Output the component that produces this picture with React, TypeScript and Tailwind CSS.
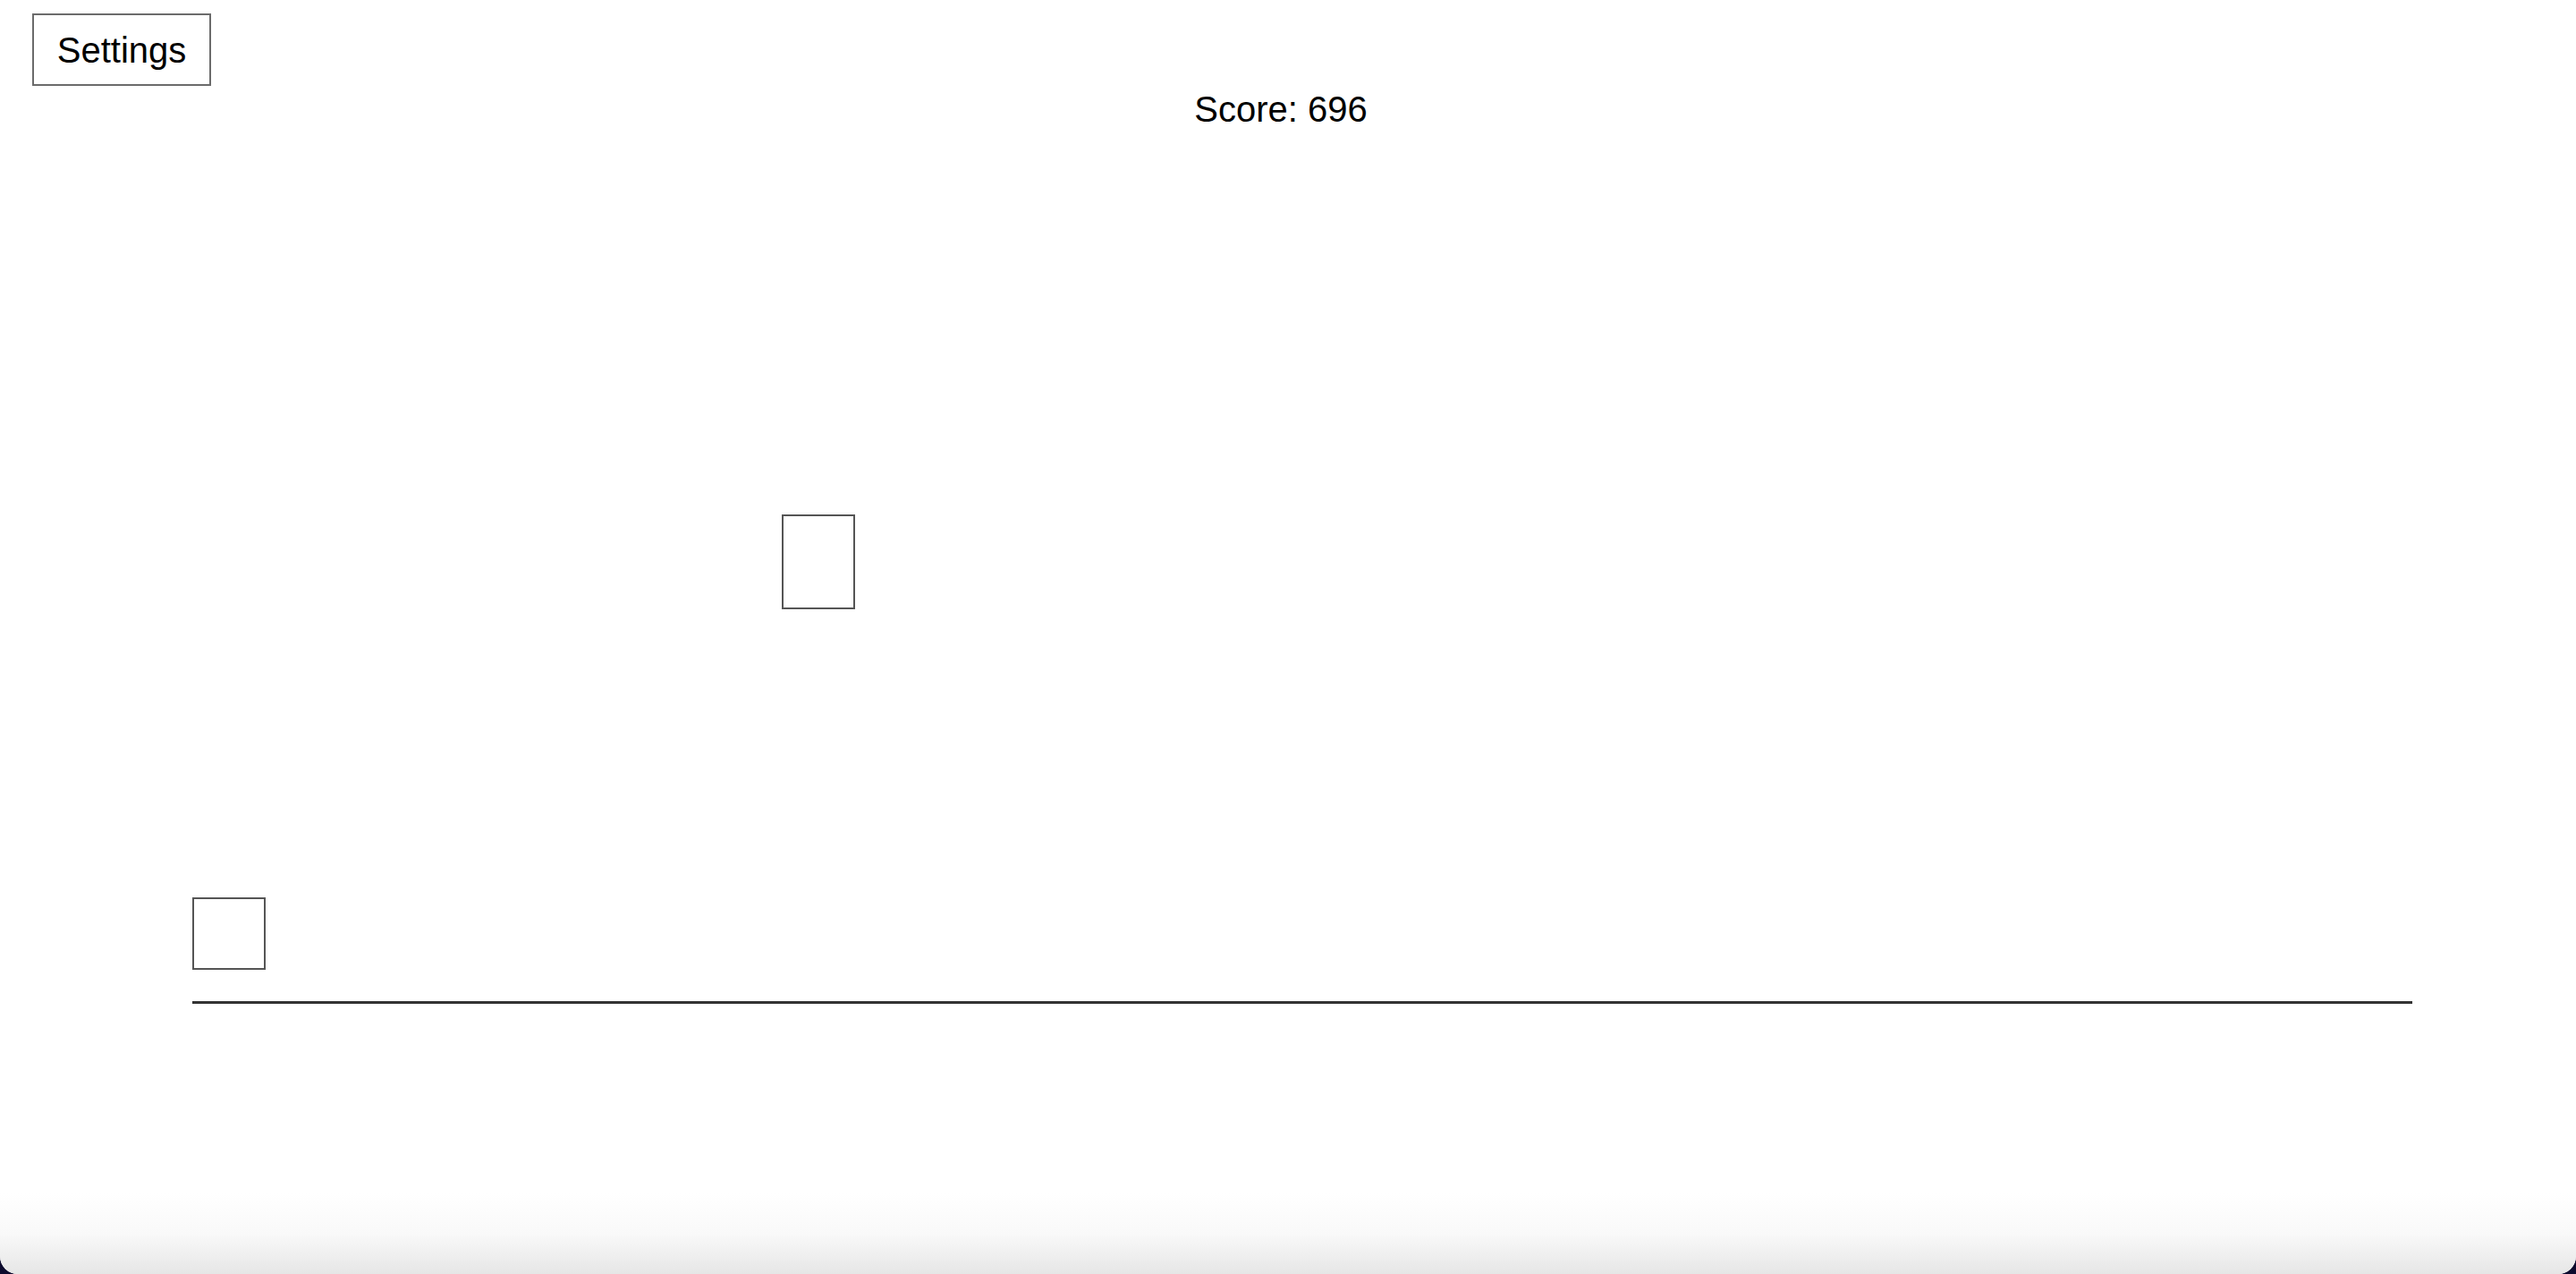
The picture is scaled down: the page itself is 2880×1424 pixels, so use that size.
import React from "react";

const obstacles = [
  { left: 874, top: 575, width: 82, height: 106 },
];

export default function App() {
  return (
    <div className="h-[1424px] w-[2880px] bg-[#0d0b2e] font-['Liberation_Sans',Arial,sans-serif] text-black">
      <div className="flex h-full flex-col overflow-hidden rounded-b-[20px] bg-white">
        <div className="relative flex-1">
          <button className="absolute left-[36px] top-[15px] h-[81px] w-[200px] border-2 border-[#6b6b6b] bg-white text-[40px] leading-none">
            Settings
          </button>
          <div className="pt-[99px] text-center text-[40px] leading-[46px] pr-[16px]">
            Score: 696
          </div>
          {/* game canvas */}
          {obstacles.map((o, i) => (
            <div
              key={i}
              className="absolute border-2 border-[#555]"
              style={{ left: o.left, top: o.top, width: o.width, height: o.height }}
            />
          ))}
          <div className="absolute left-[215px] top-[1003px] h-[81px] w-[82px] border-2 border-[#555]" />
          <div className="absolute left-[215px] top-[1119px] h-[3px] w-[2482px] bg-[#333]" />
        </div>
        <div className="h-[90px] bg-gradient-to-b from-white via-[#f9f9f9] to-[#e6e6e6]" />
      </div>
    </div>
  );
}
